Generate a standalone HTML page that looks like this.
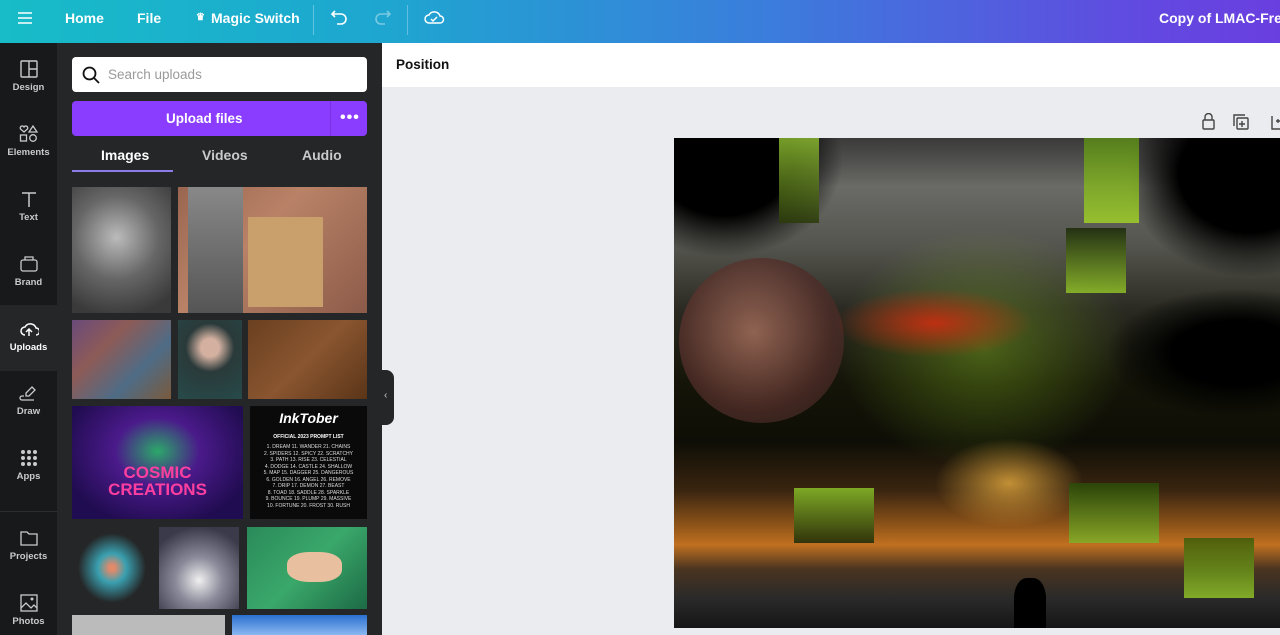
<!DOCTYPE html>
<html><head><meta charset="utf-8"><style>
*{margin:0;padding:0;box-sizing:border-box}
body{width:1280px;height:635px;overflow:hidden;font-family:"Liberation Sans",sans-serif;background:#ebecf0;position:relative}
.top{position:absolute;left:0;top:0;width:1280px;height:43px;background:linear-gradient(90deg,#17bcc8 0%,#1ea6d0 30%,#3b7ddc 60%,#6248e0 90%,#6a3fe0 100%);color:#fff;font-weight:bold;font-size:14px}
.top span{position:absolute;top:10px;white-space:nowrap}
.rail{position:absolute;left:0;top:43px;width:57px;height:592px;background:#18191b}
.ri{position:absolute;left:0;width:57px;text-align:center;color:#c9cacc;font-size:9.5px;font-weight:bold}
.ri svg{display:block;margin:0 auto 4px}
.panel{position:absolute;left:57px;top:43px;width:325px;height:592px;background:#252627}
.search{position:absolute;left:15px;top:14px;width:295px;height:35px;background:#fff;border-radius:4px;color:#9a9a9a;font-size:13.5px;padding:10px 0 0 36px}
.up{position:absolute;left:15px;top:58px;width:295px;height:35px;background:#8b3dff;border-radius:4px;color:#fff;font-weight:bold;font-size:13.5px}
.tab{position:absolute;top:104px;color:#c9cacc;font-size:14px;font-weight:bold}
.th{position:absolute}
.main{position:absolute;left:382px;top:43px;width:898px;height:44px;background:#fff}
.g{position:absolute}
</style></head><body>
<div class="top">
<svg style="position:absolute;left:17px;top:11px" width="16" height="14"><path d="M1 2h14M1 7h14M1 12h14" stroke="#fff" stroke-width="1.6"/></svg>
<span style="left:65px">Home</span><span style="left:137px">File</span>
<span style="left:196px;font-size:10px;top:12px">♛</span><span style="left:211px">Magic Switch</span>
<div style="position:absolute;left:313px;top:5px;width:1px;height:30px;background:rgba(255,255,255,.3)"></div>
<svg style="position:absolute;left:330px;top:8px" width="20" height="18"><path d="M5 3L2 6l3 3M2 6h9a5 5 0 010 10H7" fill="none" stroke="#fff" stroke-width="1.6"/></svg>
<svg style="position:absolute;left:372px;top:8px;opacity:.4" width="20" height="18"><path d="M15 3l3 3-3 3M18 6H9a5 5 0 000 10h4" fill="none" stroke="#fff" stroke-width="1.6"/></svg>
<div style="position:absolute;left:407px;top:5px;width:1px;height:30px;background:rgba(255,255,255,.3)"></div>
<svg style="position:absolute;left:423px;top:8px" width="22" height="18"><path d="M6 15a4 4 0 010-8 6 6 0 0111 1 3.5 3.5 0 010 7z" fill="none" stroke="#fff" stroke-width="1.5"/><path d="M8 11l2 2 4-4" fill="none" stroke="#fff" stroke-width="1.5"/></svg>
<span style="left:1159px">Copy of LMAC-FreeS</span>
</div>
<div class="rail">
<div style="position:absolute;left:0;top:262px;width:57px;height:66px;background:#252627"></div>
<div class="ri" style="top:17px"><svg width="18" height="18"><rect x="1" y="1" width="16" height="16" rx="1" fill="none" stroke="#c9cacc" stroke-width="1.4"/><path d="M9 1v16M9 9h8" stroke="#c9cacc" stroke-width="1.4"/></svg>Design</div>
<div class="ri" style="top:82px"><svg width="20" height="18"><path d="M5 7L1.5 4a2 2 0 013.5-2 2 2 0 013.5 2z" fill="none" stroke="#c9cacc" stroke-width="1.3"/><path d="M14 1l4 6h-8z" fill="none" stroke="#c9cacc" stroke-width="1.3"/><rect x="1.5" y="10" width="6" height="6" fill="none" stroke="#c9cacc" stroke-width="1.3"/><circle cx="14" cy="13" r="3.3" fill="none" stroke="#c9cacc" stroke-width="1.3"/></svg>Elements</div>
<div class="ri" style="top:147px"><svg width="18" height="18"><path d="M2 3h14M9 3v14" stroke="#c9cacc" stroke-width="1.5"/></svg>Text</div>
<div class="ri" style="top:212px"><svg width="20" height="18"><rect x="2" y="5" width="16" height="11" rx="2" fill="none" stroke="#c9cacc" stroke-width="1.3"/><path d="M6 5V2h8v3" fill="none" stroke="#c9cacc" stroke-width="1.3"/></svg>Brand</div>
<div class="ri" style="top:277px;color:#fff"><svg width="20" height="18"><path d="M6 15a4 4 0 010-8 6 6 0 0111 1 3.5 3.5 0 010 7" fill="none" stroke="#fff" stroke-width="1.5"/><path d="M10 16V9M7 12l3-3 3 3" fill="none" stroke="#fff" stroke-width="1.5"/></svg>Uploads</div>
<div class="ri" style="top:341px"><svg width="20" height="18"><path d="M13 3l3 3-6 6H7V9zM5 12H3a2 2 0 000 4h12" fill="none" stroke="#c9cacc" stroke-width="1.3"/></svg>Draw</div>
<div class="ri" style="top:406px"><svg width="18" height="18" fill="#c9cacc"><circle cx="3" cy="3" r="2"/><circle cx="9" cy="3" r="2"/><circle cx="15" cy="3" r="2"/><circle cx="3" cy="9" r="2"/><circle cx="9" cy="9" r="2"/><circle cx="15" cy="9" r="2"/><circle cx="3" cy="15" r="2"/><circle cx="9" cy="15" r="2"/><circle cx="15" cy="15" r="2"/></svg>Apps</div>
<div style="position:absolute;left:0;top:468px;width:57px;height:1px;background:#2c2d2f"></div>
<div class="ri" style="top:486px"><svg width="20" height="18"><path d="M2 3h6l2 2h8v11H2z" fill="none" stroke="#c9cacc" stroke-width="1.3"/></svg>Projects</div>
<div class="ri" style="top:551px"><svg width="18" height="18"><rect x="1" y="1" width="16" height="16" fill="none" stroke="#c9cacc" stroke-width="1.3"/><path d="M1 14l5-5 5 5 3-3 3 3" fill="none" stroke="#c9cacc" stroke-width="1.3"/><circle cx="12" cy="5" r="1.5" fill="#c9cacc"/></svg>Photos</div>
</div>
<div class="panel">
<div class="search">Search uploads</div>
<svg style="position:absolute;left:25px;top:23px" width="18" height="18"><circle cx="7.5" cy="7.5" r="6" fill="none" stroke="#111" stroke-width="1.8"/><path d="M12 12l5 5" stroke="#111" stroke-width="1.8"/></svg>
<div class="up"><span style="position:absolute;left:94px;top:10px">Upload files</span><div style="position:absolute;left:258px;top:0;width:1px;height:35px;background:#7a30e0"></div><span style="position:absolute;left:268px;top:9px;font-size:16px;letter-spacing:1px;line-height:16px">•••</span></div>
<div class="tab" style="left:44px;color:#fff">Images</div><div class="tab" style="left:145px">Videos</div><div class="tab" style="left:245px">Audio</div>
<div style="position:absolute;left:15px;top:127px;width:101px;height:2px;background:#8b7ce8"></div>
<div class="th" style="left:15px;top:144px;width:99px;height:126px;background:radial-gradient(circle at 45% 40%,#bbb,#666 45%,#3a3a3a 85%)"></div>
<div class="th" style="left:121px;top:144px;width:189px;height:126px;background:linear-gradient(135deg,#9a6550 0%,#b98267 40%,#8c5b49 100%)"><div style="position:absolute;left:70px;top:30px;width:75px;height:90px;background:#c9a06c"></div><div style="position:absolute;left:10px;top:0;width:55px;height:126px;background:linear-gradient(#888,#555)"></div></div>
<div class="th" style="left:15px;top:277px;width:99px;height:79px;background:linear-gradient(135deg,#6a4a7a,#8d5b57,#4e6c86,#7a5a3c)"></div>
<div class="th" style="left:121px;top:277px;width:64px;height:79px;background:radial-gradient(circle at 50% 35%,#d3b0a0 15%,#2a3a3a 40%,#274a4a)"></div>
<div class="th" style="left:191px;top:277px;width:119px;height:79px;background:linear-gradient(135deg,#6a4020,#8a5530,#5a3518)"></div>
<div class="th" style="left:15px;top:363px;width:171px;height:113px;background:radial-gradient(ellipse at 50% 40%,#2ca86a 0%,#4a1a8a 35%,#200c50 80%)"><div style="position:absolute;left:0;top:58px;width:171px;text-align:center;color:#ff3fa0;font-weight:bold;font-size:17px;line-height:17px">COSMIC<br>CREATIONS</div></div>
<div class="th" style="left:193px;top:363px;width:117px;height:113px;background:#0a0a0a;color:#fff;font-size:5px;text-align:center"><div style="font-size:14px;font-style:italic;font-weight:bold;margin-top:4px">InkTober</div><div style="margin-top:8px;font-weight:bold">OFFICIAL 2023 PROMPT LIST</div><div style="margin-top:4px;line-height:6.5px;color:#ddd">1. DREAM 11. WANDER 21. CHAINS<br>2. SPIDERS 12. SPICY 22. SCRATCHY<br>3. PATH 13. RISE 23. CELESTIAL<br>4. DODGE 14. CASTLE 24. SHALLOW<br>5. MAP 15. DAGGER 25. DANGEROUS<br>6. GOLDEN 16. ANGEL 26. REMOVE<br>7. DRIP 17. DEMON 27. BEAST<br>8. TOAD 18. SADDLE 28. SPARKLE<br>9. BOUNCE 19. PLUMP 29. MASSIVE<br>10. FORTUNE 20. FROST 30. RUSH</div></div>
<div class="th" style="left:15px;top:484px;width:80px;height:82px;background:radial-gradient(ellipse at 50% 50%,#e28a6a 5%,#3aa0b0 25%,#252627 60%)"></div>
<div class="th" style="left:102px;top:484px;width:80px;height:82px;background:radial-gradient(circle at 50% 65%,#f0f0f0,#8a8a9a 35%,#3a3a4a 80%)"></div>
<div class="th" style="left:190px;top:484px;width:120px;height:82px;background:linear-gradient(135deg,#2a8a5a,#3aa86a,#1c6a45)"><div style="position:absolute;left:40px;top:25px;width:55px;height:30px;background:#e8c0a0;border-radius:40%"></div></div>
<div class="th" style="left:15px;top:572px;width:153px;height:20px;background:#bbb"></div>
<div class="th" style="left:175px;top:572px;width:135px;height:20px;background:linear-gradient(#2a70d0,#8ab8f0)"></div>
</div>
<div style="position:absolute;left:382px;top:370px;width:12px;height:55px;background:#252627;border-radius:0 8px 8px 0;color:#ccc;font-size:10px;padding:20px 0 0 2px">‹</div>
<div class="main"><span style="position:absolute;left:14px;top:14px;font-size:13.5px;font-weight:bold;color:#111">Position</span></div>
<svg style="position:absolute;left:1200px;top:113px" width="80" height="18" fill="none" stroke="#444" stroke-width="1.4"><rect x="3" y="7" width="11" height="9" rx="1"/><path d="M5 7V4a3.5 3.5 0 017 0v3"/><rect x="37" y="5" width="11" height="11" rx="1"/><path d="M34 13V2h11M42 8v6M39 11h6"/><path d="M72 3v13h8M76 8h4M78 6v4"/></svg>
<div style="position:absolute;left:674px;top:138px;width:606px;height:490px;overflow:hidden;background:linear-gradient(180deg,#3a3a3a 0%,#6a6a66 10%,#55554f 22%,#2a2a22 35%,#141408 50%,#0e0e06 62%,#3a2510 72%,#9a5a1a 80%,#c07020 83%,#4a3420 88%,#2a2a2a 94%,#151515 100%)">
<div class="g" style="left:150px;top:80px;width:320px;height:260px;background:radial-gradient(ellipse,rgba(130,180,30,.45),transparent 65%)"></div>
<div class="g" style="left:260px;top:300px;width:150px;height:90px;background:radial-gradient(ellipse,rgba(255,190,70,.7),transparent 70%)"></div>
<div class="g" style="left:5px;top:120px;width:165px;height:165px;border-radius:50%;background:radial-gradient(circle at 45% 45%,rgba(180,120,100,.75),rgba(80,45,40,.8) 60%,rgba(50,35,30,.6))"></div>
<div class="g" style="left:160px;top:150px;width:200px;height:70px;background:radial-gradient(ellipse,rgba(220,40,15,.8),transparent 70%)"></div>
<div class="g" style="left:-30px;top:-20px;width:200px;height:140px;background:radial-gradient(ellipse at 40% 30%,#000 40%,transparent 70%)"></div>
<div class="g" style="left:450px;top:-10px;width:180px;height:150px;background:radial-gradient(ellipse at 70% 30%,#000 40%,transparent 70%)"></div>
<div class="g" style="left:430px;top:150px;width:190px;height:130px;background:radial-gradient(ellipse at 70% 50%,#000 35%,transparent 70%)"></div>
<div class="g" style="left:105px;top:0;width:40px;height:85px;background:linear-gradient(#8ab830,#2a3a08);opacity:.85"></div>
<div class="g" style="left:410px;top:0;width:55px;height:85px;background:linear-gradient(#5a8a18,#a0d028);opacity:.85"></div>
<div class="g" style="left:392px;top:90px;width:60px;height:65px;background:linear-gradient(#1a2a08,#90c028);opacity:.85"></div>
<div class="g" style="left:120px;top:350px;width:80px;height:55px;background:linear-gradient(#8ac028,#1a2a08);opacity:.85"></div>
<div class="g" style="left:395px;top:345px;width:90px;height:60px;background:linear-gradient(#2a4a08,#80b028);opacity:.85"></div>
<div class="g" style="left:510px;top:400px;width:70px;height:60px;background:linear-gradient(#3a5a08,#90c028);opacity:.85"></div>
<div class="g" style="left:340px;top:440px;width:32px;height:50px;background:#000;border-radius:40% 40% 0 0"></div>
</div>
</body></html>
